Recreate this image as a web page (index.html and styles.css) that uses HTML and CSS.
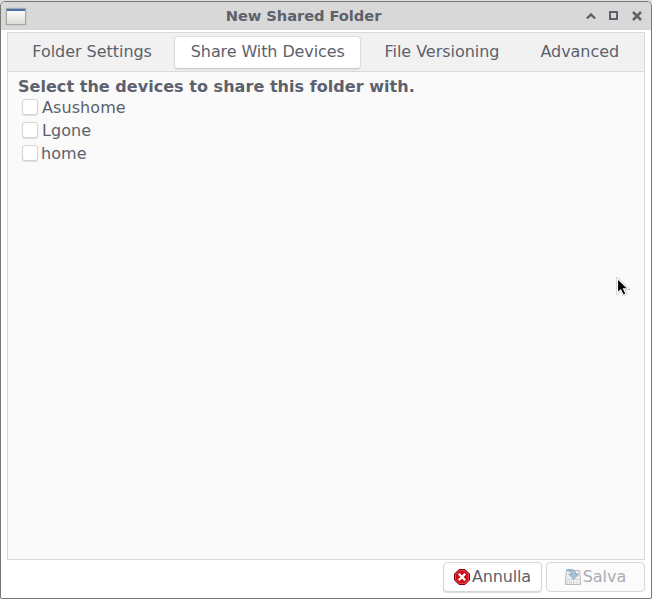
FILE: index.html
```html
<!DOCTYPE html>
<html lang="en">
<head>
<meta charset="utf-8">
<title>New Shared Folder</title>
<link rel="stylesheet" href="styles.css">
</head>
<body>
<div class="window">
  <header class="titlebar">
    <svg class="app-icon" width="22" height="19" viewBox="0 0 22 19">
      <defs><linearGradient id="pane" x1="0" y1="0" x2="0" y2="1"><stop offset="0" stop-color="#fff"/><stop offset="1" stop-color="#dcddd8"/></linearGradient></defs>
      <rect x=".5" y=".5" width="21" height="18" rx="1.5" fill="#c4c6c2"/>
      <rect x="1" y="1" width="20" height="17" fill="#a4a7a1"/>
      <rect x="2" y="2" width="18" height="15" fill="url(#pane)"/>
      <rect x="2" y="2" width="18" height="2" fill="#4771ad"/>
    </svg>
    <h1 class="title">New Shared Folder</h1>
    <div class="controls">
      <svg width="10" height="10" viewBox="0 0 10 10"><path d="M.9 7.500 5 3.400l4.100 4.100" fill="none" stroke="#5c616c" stroke-width="2.300"/></svg>
      <svg width="10" height="10" viewBox="0 0 10 10"><path d="M1 1h7v7H1z" fill="none" stroke="#5c616c" stroke-width="2"/></svg>
      <svg width="10" height="10" viewBox="0 0 10 10"><path d="m1 1 8 8M9 1 1 9" fill="none" stroke="#5c616c" stroke-width="2.500"/></svg>
    </div>
  </header>
  <main class="notebook">
    <nav class="tabs">
      <button class="tab tab-settings">Folder Settings</button>
      <button class="tab tab-devices active">Share With Devices</button>
      <button class="tab tab-version">File Versioning</button>
      <button class="tab tab-advanced">Advanced</button>
    </nav>
    <section class="page">
      <h2 class="heading">Select the devices to share this folder with.</h2>
      <div class="device"><span class="check"></span>Asushome</div>
      <div class="device"><span class="check"></span>Lgone</div>
      <div class="device last"><span class="check"></span>home</div>
    </section>
  </main>
  <footer class="actions">
    <button class="button cancel">
      <svg width="16" height="16" viewBox="0 0 16 16"><path d="M5 .5h6L15.500 5v6L11 15.500H5L.5 11V5z" fill="#cc1018" stroke="#820008"/><path d="M5.400 1.500h5.200l3.900 3.900v5.200l-3.900 3.900H5.400l-3.900-3.900V5.400z" fill="none" stroke="#e66468" stroke-width=".7"/><path d="m4.800 4.800 6.400 6.400m0-6.400-6.400 6.400" stroke="#fff" stroke-width="2.300"/></svg>
      Annulla
    </button>
    <button class="button disabled" disabled>
      <svg width="16" height="16" viewBox="0 0 16 16"><path d="M1.500 1.500h13l1 9v5H.5v-5z" fill="#eeefee" stroke="#b9bbb9"/><path d="M.5 10.500h15" stroke="#d0d2d0"/><path d="M2 13.500h8" stroke="#c5c7c5" stroke-width="2" stroke-dasharray="1 1"/><path d="M11 13.500h3" stroke="#d5d7d5"/><path d="M1 1.200C6-.5 10.800.8 10.800 5h2.800L8.700 10.200 3.800 5h3C6.800 2.900 4.500 1.700 1 1.200z" fill="#a9c2da" stroke="#7f9fbc" stroke-width=".8"/></svg>
      Salva
    </button>
  </footer>
  <svg class="cursor" width="14" height="20" viewBox="0 0 14 20"><path d="M1.500 1.500v14.500l3.200-3.100 2.700 5.300 2.700-1.300-2.500-5h4.600z" fill="none" stroke="#aaa" stroke-width="2"/><path d="M1.500 1.500v14.500l3.200-3.100 2.700 5.300 2.700-1.300-2.500-5h4.600z" fill="#000" stroke="#fff" stroke-width="1.200"/></svg>
</div>
</body>
</html>
```
FILE: styles.css
```css
* { box-sizing: border-box; }

body {
  margin: 0;
  width: 652px;
  height: 599px;
  overflow: hidden;
  padding-top: 1px;
  background: #dededc;
  color: #5c616c;
  font: 16px/20px "DejaVu Sans", sans-serif;
}

.window {
  position: relative;
  display: flex;
  flex-direction: column;
  height: 598px;
  border: 1px solid #777876;
  border-radius: 5px 5px 2px 2px;
  background: #fff;
  overflow: hidden;
}

.titlebar {
  display: flex;
  align-items: center;
  height: 28px;
  flex: none;
  padding: 0 9px 0 4px;
  background: #d8d8d8;
}

.title {
  flex: 1;
  margin: 0;
  padding-right: 16px;
  font-size: 14.67px;
  line-height: 20px;
  letter-spacing: -0.06px;
  text-align: center;
}

.controls { display: flex; gap: 13px; }

.app-icon { margin-right: 10px; }

.notebook {
  display: flex;
  flex-direction: column;
  height: 528px;
  margin: 2px 6px 0;
  border: 1px solid #d9d9d9;
  background: #fafafa;
}

.tabs {
  display: flex;
  height: 39px;
  flex: none;
  padding: 3px 7px 2px 9px;
  gap: 8px;
  border-bottom: 1px solid #d9d9d9;
  background: #f1f1f1;
}

.tab {
  height: 33px;
  padding: 0 0 1px;
  border: 1px solid transparent;
  border-radius: 4px;
  background: none;
  color: inherit;
  font: inherit;
  letter-spacing: -0.04px;
  white-space: nowrap;
}

.tab.active {
  border-color: #dcdcdc;
  border-bottom-color: #cdcdcd;
  background: #fff;
  box-shadow: 0 1px 1px #dedede;
  letter-spacing: -0.1px;
}

.tab-settings { width: 151px; }
.tab-devices { width: 188px; margin-left: -1px; }
.tab-version { width: 146px; }
.tab-advanced { width: 115px; }

.page { padding: 5px 10px; }

.heading {
  margin: 0 0 -1px;
  font-size: 16px;
  line-height: 20px;
  letter-spacing: 0.04px;
}

.device {
  display: flex;
  align-items: center;
  gap: 4px;
  height: 23px;
  padding-left: 4px;
  letter-spacing: 0.08px;
}

.device.last { gap: 3px; }

.check {
  width: 16px;
  height: 16px;
  margin-bottom: 1px;
  border: 1px solid #d4d4d4;
  border-radius: 3px;
  background: #fff;
  box-shadow: 0 1px 1px #ddd;
}

.actions {
  display: flex;
  justify-content: flex-end;
  gap: 4px;
  padding: 2px 6px;
}

.button {
  display: flex;
  align-items: center;
  justify-content: center;
  gap: 2px;
  width: 99px;
  height: 30px;
  padding: 0;
  border: 1px solid #d6d6d6;
  border-radius: 4px;
  background: #fff;
  box-shadow: 0 1px 1px #ddd;
  color: inherit;
  font: inherit;
}

.button.cancel { letter-spacing: -0.15px; }

.button.disabled {
  background: #fbfbfb;
  box-shadow: none;
  color: #aaadb3;
}

.cursor { position: absolute; left: 615px; top: 275px; }
```
